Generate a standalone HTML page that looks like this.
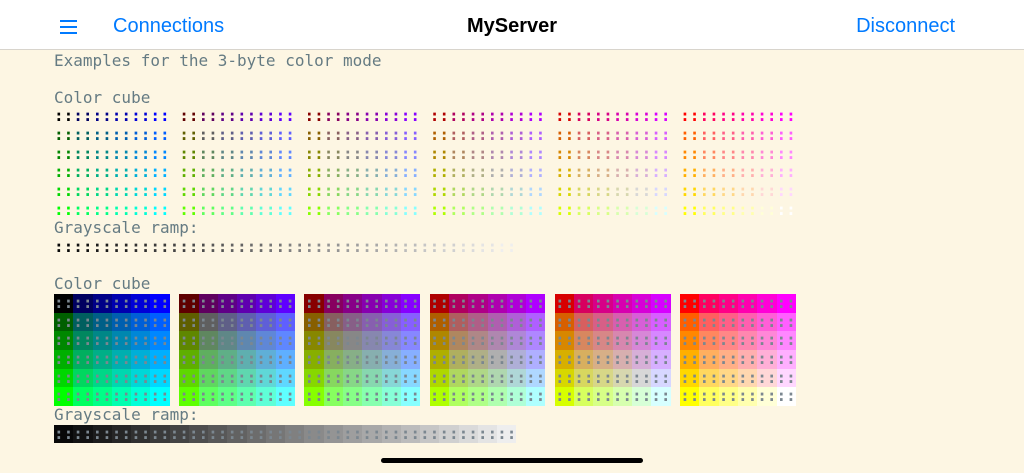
<!DOCTYPE html>
<html><head><meta charset="utf-8"><style>
html,body{margin:0;padding:0}
body{width:1024px;height:473px;overflow:hidden;background:#fdf6e3;position:relative;font-family:"Liberation Sans",sans-serif}
.hdr{position:absolute;left:0;top:0;width:1024px;height:49px;background:#fff;border-bottom:1px solid #d8d4cc}
.hb{position:absolute;left:60px;width:17px;height:2px;background:#007aff}
.lnk{position:absolute;top:15px;font-size:20px;color:#007aff}
.ttl{position:absolute;top:15px;left:0;width:1024px;text-align:center;font-size:20px;font-weight:bold;color:#000}
#t{position:absolute;left:54px;top:51.5px;margin:0;font-family:"DejaVu Sans Mono","Liberation Mono",monospace;font-size:16px;line-height:18.65px;color:#657b83;white-space:pre}
#t span{display:inline-block;height:18.65px;vertical-align:top;font-weight:bold}
.bar{position:absolute;left:381px;top:458px;width:262px;height:5px;border-radius:3px;background:#000}
</style></head><body>
<div class="hdr">
<div class="hb" style="top:20px"></div><div class="hb" style="top:26px"></div><div class="hb" style="top:32px"></div>
<div class="lnk" style="left:113px">Connections</div>
<div class="ttl">MyServer</div>
<div class="lnk" style="right:69px">Disconnect</div>
</div>
<pre id="t">Examples for the 3-byte color mode

Color cube
<span id="c1"></span>Grayscale ramp:
<span id="g1"></span>

Color cube
<span id="c2"></span>Grayscale ramp:
<span id="g2"></span></pre>
<div class="bar"></div>
<script>
var v=[0,95,135,175,215,255];
function rgb(r,g,b){return 'rgb('+r+','+g+','+b+')';}
var a='',b='';
for(var g=0;g<6;g++){
 for(var r=0;r<6;r++){
  for(var bl=0;bl<6;bl++){
   var c=rgb(v[r],v[g],v[bl]);
   a+='<span style="color:'+c+'">::</span>';
   b+='<span style="background:'+c+';color:#7b8790">::</span>';
  }
  if(r<5){a+=' ';b+=' ';}
 }
 a+='\n';b+='\n';
}
var ga='',gb='';
for(var i=0;i<24;i++){var x=8+10*i;var c=rgb(x,x,x);
 ga+='<span style="color:'+c+'">::</span>';
 gb+='<span style="background:'+c+';color:#7b8790">::</span>';}
document.getElementById('c1').outerHTML=a;
document.getElementById('c2').outerHTML=b;
document.getElementById('g1').outerHTML=ga;
document.getElementById('g2').outerHTML=gb;
</script>
</body></html>
